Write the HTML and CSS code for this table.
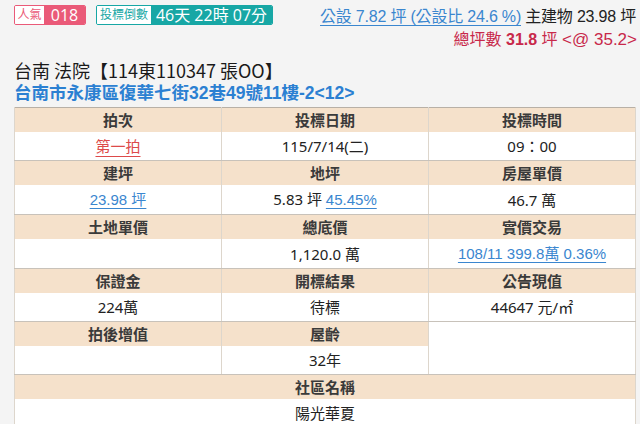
FILE: index.html
```html
<!DOCTYPE html>
<html lang="zh-Hant">
<head>
<meta charset="utf-8">
<link rel="stylesheet" href="styles.css">
</head>
<body>
<div class="page">
  <div class="top">
    <div class="badges">
      <span class="badge pink"><span class="lbl">人氣</span><span class="val">018</span></span>
      <span class="badge teal"><span class="lbl">投標倒數</span><span class="val">46天 22時 07分</span></span>
    </div>
    <div class="area">
      <div class="line1"><a class="link">公設 7.82 坪 (公設比 24.6 %)</a> 主建物 23.98 坪</div>
      <div class="line2">總坪數 <b class="num">31.8</b> 坪 <span class="at">&lt;@ 35.2&gt;</span></div>
    </div>
  </div>
  <div class="title">台南 法院【114東110347 張OO】</div>
  <div class="addr">台南市永康區復華七街32巷49號11樓-2&lt;12&gt;</div>
  <table class="info">
    <tr class="h"><td>拍次</td><td>投標日期</td><td>投標時間</td></tr>
    <tr class="v"><td><a class="red">第一拍</a></td><td>115/7/14(二)</td><td>09：00</td></tr>
    <tr class="h"><td>建坪</td><td>地坪</td><td>房屋單價</td></tr>
    <tr class="v"><td><a class="link">23.98 坪</a></td><td>5.83 坪 <a class="link">45.45%</a></td><td>46.7 萬</td></tr>
    <tr class="h"><td>土地單價</td><td>總底價</td><td>實價交易</td></tr>
    <tr class="v"><td></td><td>1,120.0 萬</td><td><a class="link">108/11 399.8萬 0.36%</a></td></tr>
    <tr class="h"><td>保證金</td><td>開標結果</td><td>公告現值</td></tr>
    <tr class="v"><td>224萬</td><td>待標</td><td>44647 元/㎡</td></tr>
    <tr class="h"><td>拍後增值</td><td>屋齡</td><td class="blank" rowspan="2"></td></tr>
    <tr class="v"><td></td><td>32年</td></tr>
    <tr class="h"><td colspan="3">社區名稱</td></tr>
    <tr class="v"><td colspan="3">陽光華夏</td></tr>
  </table>
</div>
</body>
</html>
```
FILE: styles.css
```css
html, body {
  margin: 0;
  padding: 0;
  background: #f4f4f4;
}
body {
  font-family: "Noto Sans", "Noto Sans CJK TC", sans-serif;
  color: #222;
  width: 640px;
  height: 424px;
  overflow: hidden;
}
.page {
  padding: 5px 4px 0 14px;
}
.top {
  display: flex;
  justify-content: space-between;
  align-items: flex-start;
  height: 52px;
}
.badges {
  display: flex;
  gap: 10px;
}
.badge {
  display: flex;
  height: 18px;
  border: 1px solid;
  border-radius: 2px;
  overflow: hidden;
}
.badge .lbl {
  background: #fff;
  font-size: 12px;
  line-height: 18px;
  text-align: center;
}
.badge .val {
  color: #fff;
  font-size: 16px;
  line-height: 18px;
  text-align: center;
  font-family: "Open Sans", "Noto Sans CJK TC", sans-serif;
}
.pink { border-color: #ea5a78; }
.pink .lbl { color: #ea5a78; width: 29px; }
.pink .val { background: #ea5a78; width: 41px; }
.teal { border-color: #17a7a5; }
.teal .lbl { color: #17a7a5; width: 54px; }
.teal .val { background: #17a7a5; width: 121px; }
.area {
  display: flex;
  flex-direction: column;
  align-items: flex-end;
  font-family: "Liberation Sans", "Noto Sans CJK TC", sans-serif;
  font-size: 16px;
  padding-top: 2px;
}
.line1 { line-height: 20px; color: #222; letter-spacing: -0.2px; }
.line2 {
  line-height: 26px;
  color: #c8284a;
  margin-right: -1px;
}
.line2 .at { font-size: 17px; }
.link {
  color: #3a86cf;
  text-decoration: underline;
  text-underline-offset: 3px;
}
.title {
  font-family: "Noto Sans CJK TC", sans-serif;
  font-size: 18px;
  line-height: 24px;
  color: #1a1a1a;
  margin-top: 1px;
}
.addr {
  font-family: "Liberation Sans", "Noto Sans CJK TC", sans-serif;
  font-weight: bold;
  font-size: 17.5px;
  line-height: 22px;
  color: #2b80d2;
  margin-bottom: 3px;
}
.info {
  width: 622px;
  border-collapse: collapse;
  table-layout: fixed;
  border: 1px solid #b8b0a6;
  font-family: "Noto Sans", "Noto Sans CJK TC", sans-serif;
  font-size: 15px;
  color: #222;
}
.info td {
  text-align: center;
  padding: 0;
  border-left: 1px solid #ddd6cc;
  border-right: 1px solid #ddd6cc;
}
.info tr.h td {
  background: #f5e1cb;
  height: 24px;
  line-height: 24px;
  font-family: "Noto Sans CJK TC", sans-serif;
  font-weight: bold;
  color: #3a3a3a;
}
.info tr.v td {
  background: #fff;
  height: 28px;
  line-height: 28px;
  border-bottom: 1px solid #c8c2ba;
}
.info tr.h td.blank {
  background: #fff;
  border-bottom: 1px solid #c8c2ba;
}
.info .red {
  color: #dd4a4a;
  text-decoration: underline;
  text-underline-offset: 4px;
  font-family: "Noto Sans CJK TC", sans-serif;
}
.info .link {
  font-family: "Liberation Sans", "Noto Sans CJK TC", sans-serif;
}
```
